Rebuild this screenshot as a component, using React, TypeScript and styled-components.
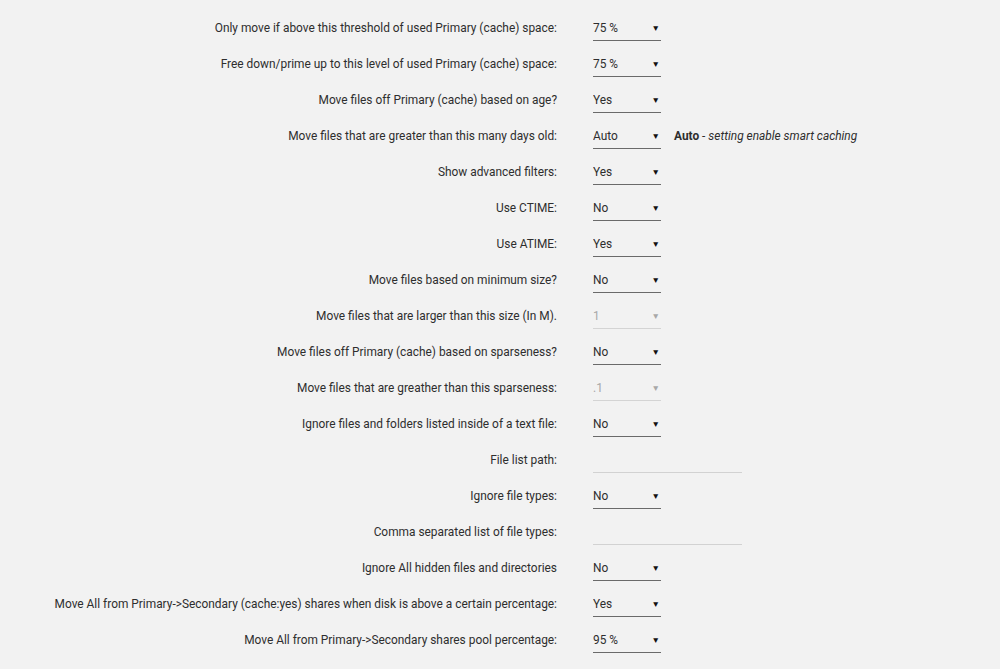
import React from "react";
import styled, { createGlobalStyle } from "styled-components";

const GlobalStyle = createGlobalStyle`
  html, body {
    margin: 0;
    padding: 0;
    background: #f2f2f2;
  }
  body {
    font-family: Roboto, "Liberation Sans", sans-serif;
    font-size: 11.9px;
    color: #2e2e2e;
  }
`;

const Form = styled.form`
  padding-top: 10px;
  display: flex;
  flex-direction: column;
`;

const Row = styled.div`
  display: grid;
  grid-template-columns: 557px auto;
  column-gap: 36px;
  align-items: center;
  height: 36px;
`;

const Label = styled.label`
  text-align: right;
  white-space: nowrap;
  line-height: 16px;
`;

const Field = styled.div`
  display: flex;
  align-items: center;
  gap: 13px;
`;

const SelectWrap = styled.div<{ $disabled?: boolean }>`
  position: relative;
  width: 68px;
  height: 25px;
  &::after {
    content: "▼";
    position: absolute;
    right: 1px;
    top: 8px;
    font-size: 8.5px;
    line-height: 9px;
    color: ${(p) => (p.$disabled ? "#a8a8a8" : "#111111")};
    pointer-events: none;
  }
`;

const Select = styled.select`
  appearance: none;
  -webkit-appearance: none;
  display: block;
  width: 100%;
  height: 100%;
  margin: 0;
  padding: 0;
  border: none;
  border-bottom: 1px solid #6a6a6a;
  border-radius: 0;
  background: transparent;
  font: inherit;
  color: #2e2e2e;
  outline: none;
  &:disabled {
    color: #a8a8a8;
    border-bottom-color: #d4d4d4;
    opacity: 1;
  }
`;

const TextInput = styled.input`
  display: block;
  width: 149px;
  height: 25px;
  margin: 0;
  padding: 0;
  border: none;
  border-bottom: 1px solid #d2d2d2;
  background: transparent;
  font: inherit;
  outline: none;
  box-sizing: border-box;
`;

const Hint = styled.span`
  white-space: nowrap;
  color: #2e2e2e;
  b {
    font-weight: 700;
  }
  i {
    font-style: italic;
  }
`;

type Setting =
  | { label: string; kind: "select"; value: string; options: string[]; disabled?: boolean; hint?: boolean }
  | { label: string; kind: "text" };

const yesNo = ["No", "Yes"];
const percents = ["5 %", "25 %", "50 %", "75 %", "95 %"];

const settings: Setting[] = [
  { label: "Only move if above this threshold of used Primary (cache) space:", kind: "select", value: "75 %", options: percents },
  { label: "Free down/prime up to this level of used Primary (cache) space:", kind: "select", value: "75 %", options: percents },
  { label: "Move files off Primary (cache) based on age?", kind: "select", value: "Yes", options: yesNo },
  { label: "Move files that are greater than this many days old:", kind: "select", value: "Auto", options: ["Auto", "1", "7", "30"], hint: true },
  { label: "Show advanced filters:", kind: "select", value: "Yes", options: yesNo },
  { label: "Use CTIME:", kind: "select", value: "No", options: yesNo },
  { label: "Use ATIME:", kind: "select", value: "Yes", options: yesNo },
  { label: "Move files based on minimum size?", kind: "select", value: "No", options: yesNo },
  { label: "Move files that are larger than this size (In M).", kind: "select", value: "1", options: ["1", "10", "100"], disabled: true },
  { label: "Move files off Primary (cache) based on sparseness?", kind: "select", value: "No", options: yesNo },
  { label: "Move files that are greather than this sparseness:", kind: "select", value: ".1", options: [".1", ".5", ".9"], disabled: true },
  { label: "Ignore files and folders listed inside of a text file:", kind: "select", value: "No", options: yesNo },
  { label: "File list path:", kind: "text" },
  { label: "Ignore file types:", kind: "select", value: "No", options: yesNo },
  { label: "Comma separated list of file types:", kind: "text" },
  { label: "Ignore All hidden files and directories", kind: "select", value: "No", options: yesNo },
  { label: "Move All from Primary->Secondary (cache:yes) shares when disk is above a certain percentage:", kind: "select", value: "Yes", options: yesNo },
  { label: "Move All from Primary->Secondary shares pool percentage:", kind: "select", value: "95 %", options: percents },
];

export default function App() {
  return (
    <>
      <GlobalStyle />
      <Form onSubmit={(e) => e.preventDefault()}>
        {settings.map((s, i) => (
          <Row key={i}>
            <Label>{s.label}</Label>
            <Field>
              {s.kind === "select" ? (
                <>
                  <SelectWrap $disabled={s.disabled}>
                    <Select defaultValue={s.value} disabled={s.disabled}>
                      {s.options.map((o) => (
                        <option key={o}>{o}</option>
                      ))}
                    </Select>
                  </SelectWrap>
                  {s.hint && (
                    <Hint>
                      <b>Auto</b> - <i>setting enable smart caching</i>
                    </Hint>
                  )}
                </>
              ) : (
                <TextInput type="text" />
              )}
            </Field>
          </Row>
        ))}
      </Form>
    </>
  );
}
